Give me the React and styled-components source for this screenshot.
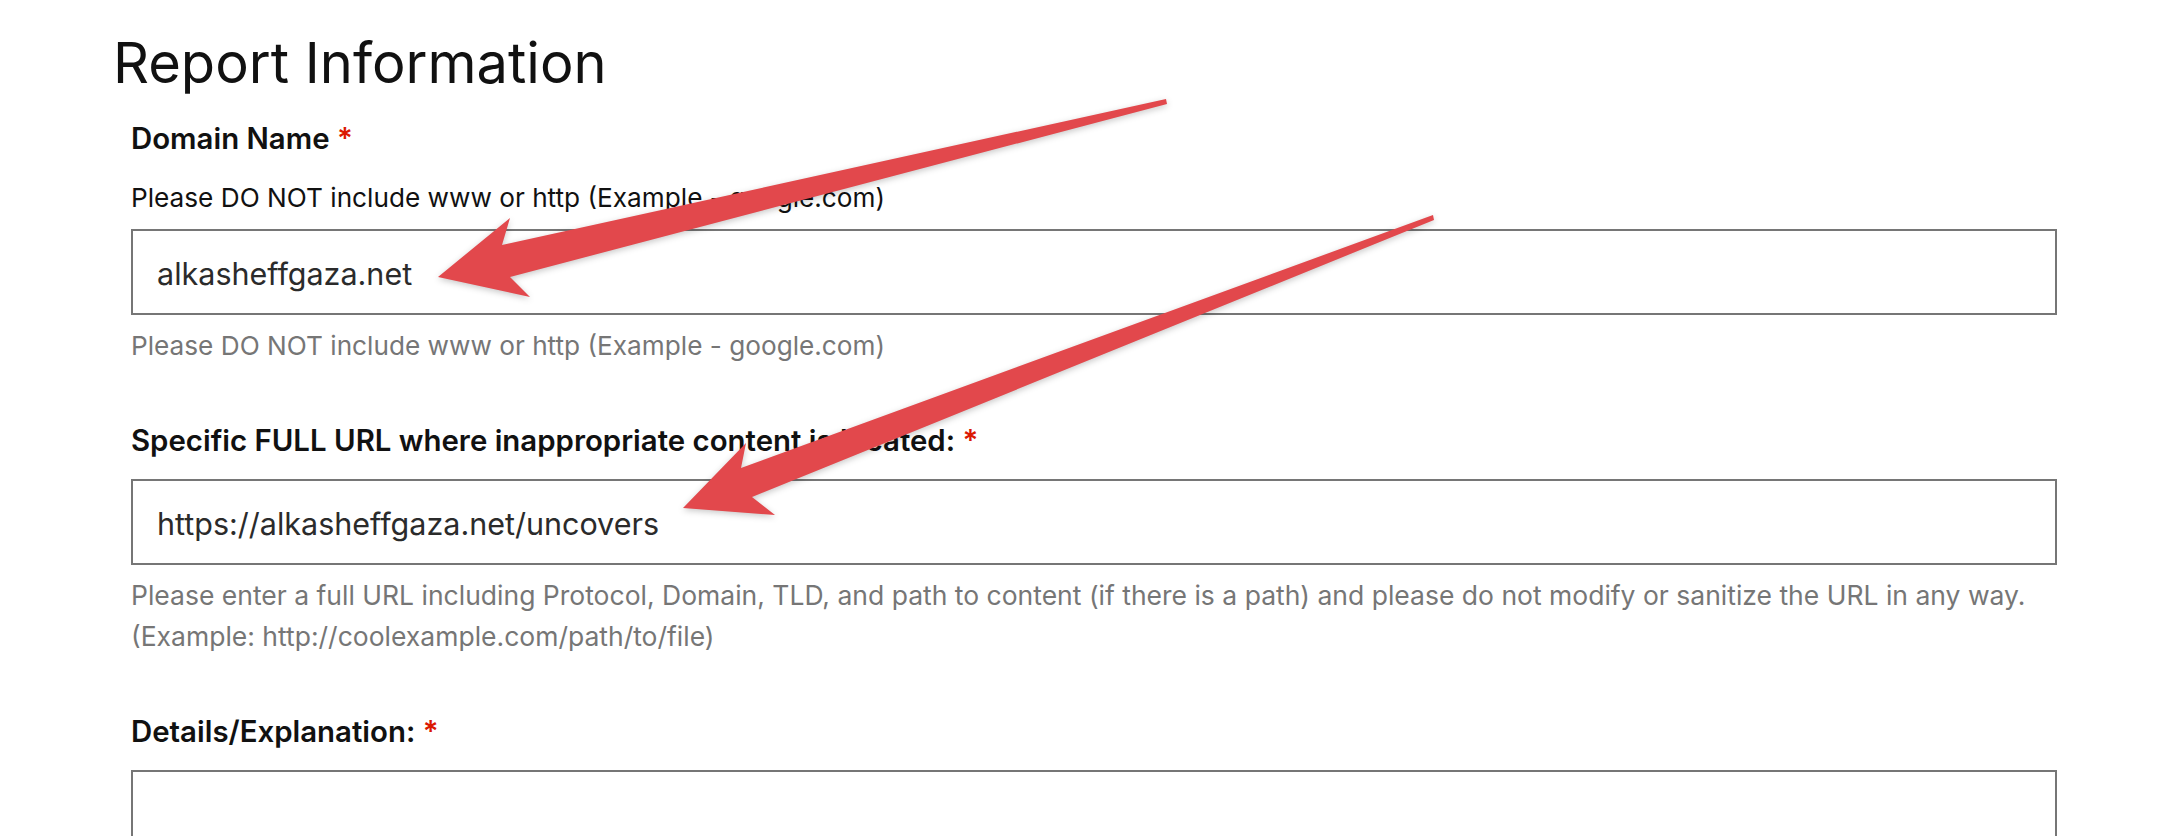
import React from "react";
import styled, { createGlobalStyle } from "styled-components";

const GlobalStyle = createGlobalStyle`
  html, body {
    margin: 0;
    padding: 0;
    background: #fff;
  }
  body {
    font-family: Inter, "Liberation Sans", sans-serif;
    color: #111;
    overflow: hidden;
  }
`;

const Page = styled.div`
  position: relative;
  width: 2174px;
  height: 836px;
  box-sizing: border-box;
  padding: 31px 117px 0 113px;
  overflow: hidden;
`;

const Title = styled.h2`
  margin: 0 0 26px;
  font-size: 56px;
  line-height: 64px;
  font-weight: 400;
  color: #111;
`;

const Form = styled.form`
  display: flex;
  flex-direction: column;
  padding-left: 18px;
`;

const Field = styled.div`
  margin-bottom: 57px;
`;

const Label = styled.label`
  display: block;
  margin-bottom: 20px;
  font-size: 29.4px;
  line-height: 36px;
  font-weight: 600;
  color: #111;
`;

const Required = styled.span`
  color: #db1802;
`;

const Description = styled.p`
  margin: 23px 0 13px;
  font-size: 26.2px;
  line-height: 36px;
  color: #111;
`;

const TextInput = styled.input`
  display: block;
  width: 100%;
  height: 86px;
  box-sizing: border-box;
  padding: 2px 24px 0;
  border: 2px solid #767676;
  border-radius: 0;
  background: #fff;
  font-family: inherit;
  font-size: 30.5px;
  color: #2b2b2b;
  outline: none;
`;

const TextArea = styled.textarea`
  display: block;
  width: 100%;
  height: 220px;
  box-sizing: border-box;
  padding: 20px 24px;
  border: 2px solid #767676;
  border-radius: 0;
  resize: none;
  font-family: inherit;
  font-size: 30px;
`;

const Help = styled.p`
  margin: 10px 0 0;
  font-size: ${(p) => (p.$long ? "26.5px" : "26.2px")};
  line-height: 41px;
  color: #767676;
`;

const Overlay = styled.svg`
  position: absolute;
  top: 0;
  left: 0;
  width: 2174px;
  height: 836px;
  pointer-events: none;
  filter: drop-shadow(0 2px 3px rgba(0, 0, 0, 0.22));
`;

const Arrow = styled.path`
  fill: #e2484c;
`;

function Annotations() {
  return (
    <Overlay viewBox="0 0 2174 836">
      <Arrow d="M1166 99 L1167 104 L510 277 L530 297 L438 277 L510 218 L502 245 Z" />
      <Arrow d="M1433 215 L1434 220 L752 497 L775 515 L683 508 L746 443 L741 468 Z" />
    </Overlay>
  );
}

export default function App() {
  return (
    <Page>
      <GlobalStyle />
      <Title>Report Information</Title>
      <Form>
        <Field>
          <Label htmlFor="domain">
            Domain Name<Required> *</Required>
          </Label>
          <Description>Please DO NOT include www or http (Example - google.com)</Description>
          <TextInput id="domain" readOnly defaultValue="alkasheffgaza.net" />
          <Help>Please DO NOT include www or http (Example - google.com)</Help>
        </Field>
        <Field>
          <Label htmlFor="url">
            Specific FULL URL where inappropriate content is located:<Required> *</Required>
          </Label>
          <TextInput id="url" readOnly defaultValue="https://alkasheffgaza.net/uncovers" />
          <Help $long>
            Please enter a full URL including Protocol, Domain, TLD, and path to content (if there is a path) and please do not modify or sanitize the URL in any way.
            <br />
            (Example: http://coolexample.com/path/to/file)
          </Help>
        </Field>
        <Field>
          <Label htmlFor="details">
            Details/Explanation:<Required> *</Required>
          </Label>
          <TextArea id="details" readOnly />
        </Field>
      </Form>
      <Annotations />
    </Page>
  );
}
